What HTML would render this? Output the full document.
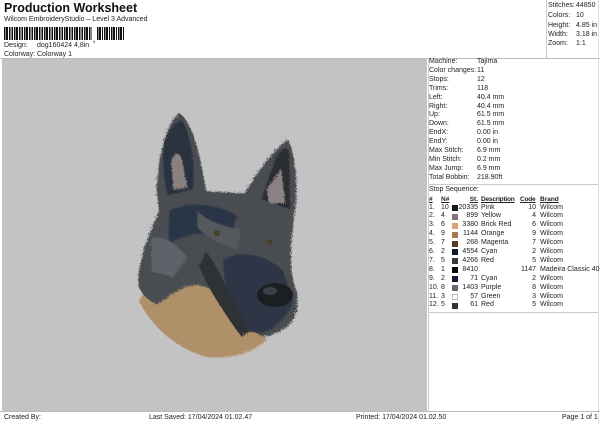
<!DOCTYPE html>
<html><head><meta charset="utf-8"><style>
*{margin:0;padding:0;box-sizing:border-box}
body{width:600px;height:424px;background:#fff;font-family:"Liberation Sans",Arial,sans-serif;color:#222;position:relative;overflow:hidden;font-size:7px}
.a{position:absolute;white-space:nowrap;line-height:9px}
.r{text-align:right}
</style></head><body>
<div class="a" style="left:4px;top:1px;font-size:12.5px;font-weight:bold;line-height:15px;color:#111">Production Worksheet</div>
<div class="a" style="left:4px;top:15px">Wilcom EmbroideryStudio – Level 3 Advanced</div>
<div class="a" style="left:4px;top:27px;width:88px;height:13px;background:repeating-linear-gradient(90deg,#111 0 1.5px,#fff 1.5px 2px,#111 2px 4px,#fff 4px 5px,#111 5px 6.5px,#fff 6.5px 7.5px,#111 7.5px 9px,#fff 9px 10px)"></div>
<div class="a" style="left:93px;top:36px;font-size:7px;font-weight:bold">,</div>
<div class="a" style="left:97px;top:27px;width:28px;height:13px;background:repeating-linear-gradient(90deg,#111 0 1.5px,#fff 1.5px 2px,#111 2px 4px,#fff 4px 5px,#111 5px 6px,#fff 6px 7px)"></div>
<div class="a" style="left:4px;top:41px">Design:</div><div class="a" style="left:37px;top:41px">dog160424 4,8in</div>
<div class="a" style="left:4px;top:50px">Colorway:</div><div class="a" style="left:37px;top:50px">Colorway 1</div>
<div class="a" style="left:546px;top:0;width:1px;height:59px;background:#ccc"></div>
<div class="a" style="left:548px;top:1px">Stitches:</div><div class="a" style="left:576px;top:1px">44850</div>
<div class="a" style="left:548px;top:11px">Colors:</div><div class="a" style="left:576px;top:11px">10</div>
<div class="a" style="left:548px;top:21px">Height:</div><div class="a" style="left:576px;top:21px">4.85 in</div>
<div class="a" style="left:548px;top:30px">Width:</div><div class="a" style="left:576px;top:30px">3.18 in</div>
<div class="a" style="left:548px;top:39px">Zoom:</div><div class="a" style="left:576px;top:39px">1:1</div>
<div class="a" style="left:0;top:58px;width:600px;height:1px;background:#bbb"></div>
<div class="a" style="left:598px;top:0;width:1px;height:424px;background:#ddd"></div>
<div class="a" style="left:2px;top:59px;width:425px;height:352px;background:#c3c3c3"></div>
<svg class="a" style="left:0;top:0" width="600" height="424">
<defs><filter id="f"><feTurbulence baseFrequency="0.9" numOctaves="2" result="t"/><feDisplacementMap in="SourceGraphic" in2="t" scale="5"/></filter></defs>
<g filter="url(#f)">
<path d="M138,300 C150,325 175,348 207,356 C232,358 255,350 265,338 L255,300 L200,262 L148,275 Z" fill="#b09068"/>
<path d="M137,280 C138,255 148,232 158,210 L155,188 C158,150 166,120 178,112 C192,120 200,160 205,190 L243,192 C260,165 275,145 287,138 C296,160 297,190 293,215 C290,240 288,262 292,280 C300,300 296,318 285,326 C270,336 258,340 250,325 C240,305 218,288 198,284 C180,282 166,298 155,303 C145,298 137,290 137,280 Z" fill="#4a4d51"/>
<path d="M163,140 C170,124 177,118 182,120 C190,140 194,162 192,188 L166,194 C162,172 161,156 163,140 Z" fill="#2c3340"/>
<path d="M170,160 C174,150 178,150 181,160 L186,186 L172,189 Z" fill="#8a8080"/>
<path d="M274,158 C280,146 286,144 288,152 L289,208 L260,198 Z" fill="#2c2f33"/>
<path d="M265,188 L280,168 L284,202 L268,202 Z" fill="#8a8282"/>
<path d="M168,210 C190,198 218,204 236,214 L228,238 C205,228 186,232 168,242 Z" fill="#2c3547"/>
<path d="M222,258 C240,248 266,254 282,270 L292,300 C282,322 266,336 250,330 C234,314 222,290 222,258 Z" fill="#2d3546"/>
<path d="M205,250 C220,270 230,300 250,330 L240,335 C225,315 205,285 198,265 Z" fill="#2f3134"/>
<path d="M150,238 C162,232 176,244 186,256 L172,276 L150,270 Z" fill="#5e6268"/>
<path d="M196,210 C210,222 225,226 240,228 L236,248 C220,244 205,236 196,226 Z" fill="#55585c"/>
</g>
<ellipse cx="275" cy="295" rx="18" ry="12" fill="#1c1f22"/>
<ellipse cx="270" cy="291" rx="7" ry="4" fill="#3a4048"/>
<circle cx="217" cy="233" r="3" fill="#4a4030"/>
<circle cx="270" cy="242" r="3" fill="#4a4030"/>
</svg>
<div class="a" style="left:428px;top:58px;width:1px;height:354px;background:#ccc"></div>
<div style="position:absolute;left:429px;top:58px;line-height:8.9px">
<div>Machine:</div><div>Color changes:</div><div>Stops:</div><div>Trims:</div><div>Left:</div><div>Right:</div><div>Up:</div><div>Down:</div><div>EndX:</div><div>EndY:</div><div>Max Stitch:</div><div>Min Stitch:</div><div>Max Jump:</div><div>Total Bobbin:</div></div>
<div style="position:absolute;left:477px;top:58px;line-height:8.9px">
<div>Tajima</div><div>11</div><div>12</div><div>118</div><div>40.4 mm</div><div>40.4 mm</div><div>61.5 mm</div><div>61.5 mm</div><div>0.00 in</div><div>0.00 in</div><div>6.9 mm</div><div>0.2 mm</div><div>6.9 mm</div><div>218.90ft</div></div>
<div class="a" style="left:428px;top:184px;width:170px;height:1px;background:#ccc"></div>
<div class="a" style="left:429px;top:185px">Stop Sequence:</div>
<div class="a" style="left:429px;top:195px;font-weight:bold;text-decoration:underline;font-size:6.5px">#</div>
<div class="a" style="left:441px;top:195px;font-weight:bold;text-decoration:underline;font-size:6.5px">N#</div>
<div class="a r" style="left:458px;width:20px;top:195px;font-weight:bold;text-decoration:underline;font-size:6.5px">St.</div>
<div class="a" style="left:481px;top:195px;font-weight:bold;text-decoration:underline;font-size:6.5px;letter-spacing:-0.2px">Description</div>
<div class="a" style="left:520px;top:195px;font-weight:bold;text-decoration:underline;font-size:6.5px;letter-spacing:-0.2px">Code</div>
<div class="a" style="left:540px;top:195px;font-weight:bold;text-decoration:underline;font-size:6.5px">Brand</div>
<div style="position:absolute;left:429px;top:203.5px;line-height:8.9px">
<div>1.</div><div>2.</div><div>3.</div><div>4.</div><div>5.</div><div>6.</div><div>7.</div><div>8.</div><div>9.</div><div>10.</div><div>11.</div><div>12.</div></div>
<div style="position:absolute;left:441px;top:203.5px;line-height:8.9px">
<div>10</div><div>4</div><div>6</div><div>9</div><div>7</div><div>2</div><div>5</div><div>1</div><div>2</div><div>8</div><div>3</div><div>5</div></div>
<div style="position:absolute;left:452px;top:205px">
<div style="width:6px;height:6px;margin-bottom:2.9px;background:#1a1a1a"></div>
<div style="width:6px;height:6px;margin-bottom:2.9px;background:#8a7078"></div>
<div style="width:6px;height:6px;margin-bottom:2.9px;background:#d9a07a"></div>
<div style="width:6px;height:6px;margin-bottom:2.9px;background:#a87850"></div>
<div style="width:6px;height:6px;margin-bottom:2.9px;background:#5a3a20"></div>
<div style="width:6px;height:6px;margin-bottom:2.9px;background:#111828"></div>
<div style="width:6px;height:6px;margin-bottom:2.9px;background:#3a3a3a"></div>
<div style="width:6px;height:6px;margin-bottom:2.9px;background:#0a0a0a"></div>
<div style="width:6px;height:6px;margin-bottom:2.9px;background:#141c30"></div>
<div style="width:6px;height:6px;margin-bottom:2.9px;background:#6a6670"></div>
<div style="width:6px;height:6px;margin-bottom:2.9px;background:#fff;border:1px solid #bbb"></div>
<div style="width:6px;height:6px;background:#333"></div></div>
<div style="position:absolute;left:458px;width:20px;text-align:right;top:203.5px;line-height:8.9px">
<div>20335</div><div>899</div><div>3380</div><div>1144</div><div>268</div><div>4554</div><div>4266</div><div>8410</div><div>71</div><div>1403</div><div>57</div><div>61</div></div>
<div style="position:absolute;left:481px;top:203.5px;line-height:8.9px">
<div>Pink</div><div>Yellow</div><div>Brick Red</div><div>Orange</div><div>Magenta</div><div>Cyan</div><div>Red</div><div>&nbsp;</div><div>Cyan</div><div>Purple</div><div>Green</div><div>Red</div></div>
<div style="position:absolute;left:516px;width:20px;text-align:right;top:203.5px;line-height:8.9px">
<div>10</div><div>4</div><div>6</div><div>9</div><div>7</div><div>2</div><div>5</div><div>1147</div><div>2</div><div>8</div><div>3</div><div>5</div></div>
<div style="position:absolute;left:540px;top:203.5px;line-height:8.9px">
<div>Wilcom</div><div>Wilcom</div><div>Wilcom</div><div>Wilcom</div><div>Wilcom</div><div>Wilcom</div><div>Wilcom</div><div>Madeira Classic 40</div><div>Wilcom</div><div>Wilcom</div><div>Wilcom</div><div>Wilcom</div></div>
<div class="a" style="left:428px;top:312px;width:170px;height:1px;background:#ccc"></div>
<div class="a" style="left:0;top:411px;width:600px;height:1px;background:#bbb"></div>
<div class="a" style="left:4px;top:413px">Created By:</div>
<div class="a" style="left:149px;top:413px">Last Saved: 17/04/2024 01.02.47</div>
<div class="a" style="left:356px;top:413px">Printed: 17/04/2024 01.02.50</div>
<div class="a" style="left:562px;top:413px">Page 1 of 1</div>
</body></html>
